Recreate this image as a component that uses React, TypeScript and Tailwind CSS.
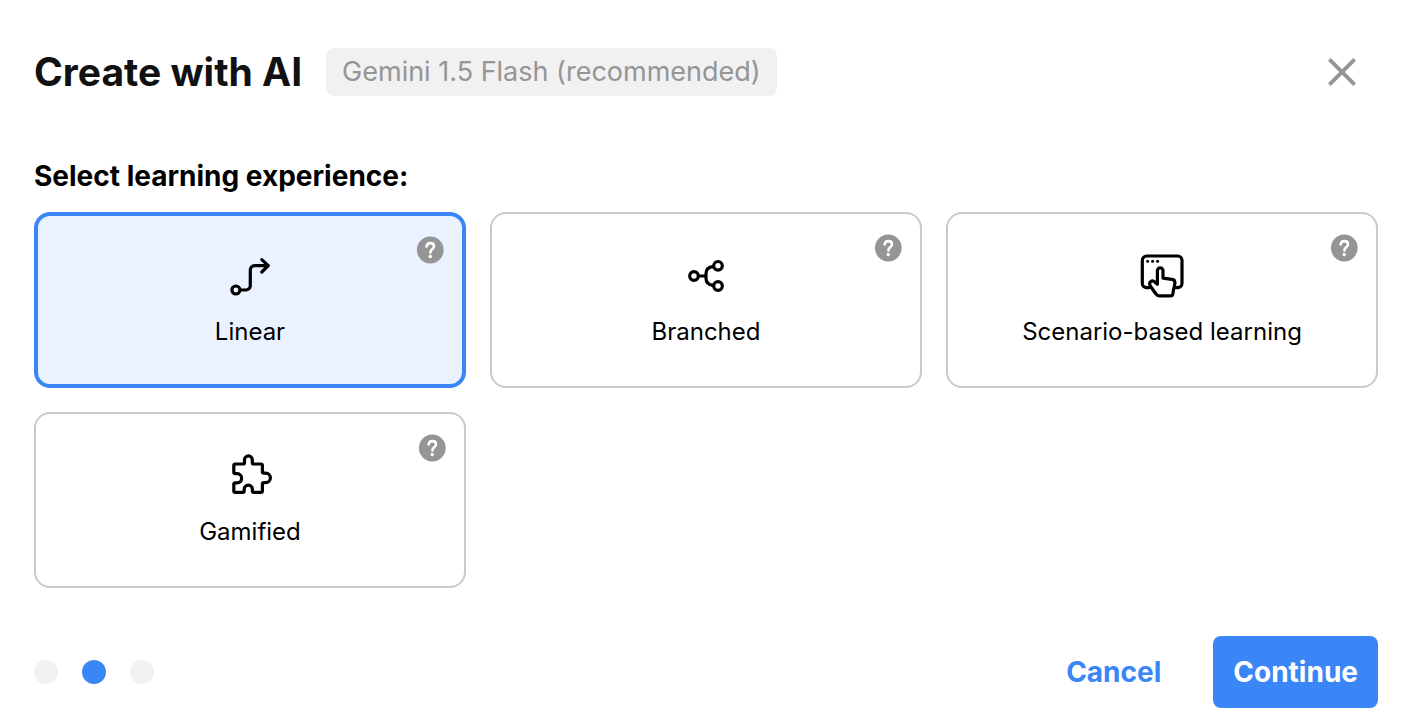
import React, { useState } from 'react';
import { MdClose } from 'react-icons/md';

interface Experience {
  id: string;
  label: string;
  icon: React.ReactNode;
}

const IconFrame: React.FC<{ children: React.ReactNode }> = ({ children }) => (
  <svg
    className="size-12"
    viewBox="0 0 48 48"
    fill="none"
    stroke="currentColor"
    strokeWidth="3.2"
    strokeLinecap="round"
    strokeLinejoin="round"
    aria-hidden="true"
  >
    {children}
  </svg>
);

const HelpIcon: React.FC = () => (
  <svg className="size-8" viewBox="0 0 32 32" fill="none" aria-hidden="true">
    <circle cx="16.3" cy="16" r="13.4" fill="currentColor" />
    <path
      d="M12.6 12.4c.4-2.1 1.8-3.3 3.7-3.3 2.2 0 3.7 1.2 3.7 3.1 0 1.4-.7 2.2-1.8 3.1-1.2 1-1.8 1.6-1.8 3.2"
      stroke="white"
      strokeWidth="2.6"
      strokeLinecap="round"
      strokeLinejoin="round"
    />
    <circle cx="16.3" cy="22.5" r="1.7" fill="white" />
  </svg>
);

const experiences: Experience[] = [
  {
    id: 'linear',
    label: 'Linear',
    icon: (
      <IconFrame>
        <circle cx="9.9" cy="38" r="4" />
        <path d="M14.5 38H20a4.3 4.3 0 0 0 4.3-4.3V17.9a4.3 4.3 0 0 1 4.3-4.3H42" />
        <path d="M35.8 7.6l6.4 6-6.4 6.4" />
      </IconFrame>
    ),
  },
  {
    id: 'branched',
    label: 'Branched',
    icon: (
      <IconFrame>
        <circle cx="12" cy="24" r="4.3" />
        <circle cx="36" cy="13.8" r="4.3" />
        <circle cx="36" cy="34" r="4.3" />
        <path d="M17 24h7M31 14.6c-4.4.4-7 3.2-7 7.2v4.4c0 4 2.6 6.6 7 7.2" />
      </IconFrame>
    ),
  },
  {
    id: 'scenario',
    label: 'Scenario-based learning',
    icon: (
      <IconFrame>
        <path d="M11 35.6H8.6a4.3 4.3 0 0 1-4.3-4.3V8.3A4.3 4.3 0 0 1 8.6 4h31.1a4.3 4.3 0 0 1 4.3 4.3v23a4.3 4.3 0 0 1-4.3 4.3h-2.4" />
        <g fill="currentColor" stroke="none">
          <circle cx="9.6" cy="9.3" r="1.5" />
          <circle cx="14.6" cy="9.3" r="1.5" />
          <circle cx="19.6" cy="9.3" r="1.5" />
        </g>
        <path d="M19.4 32.2V18.6a2.8 2.8 0 0 1 5.6 0v7.6l9 1.1c2.2.3 3 1.5 2.9 3.6-.1 2.600-1 4.200-1.400 6.800l-.6 4c-.2 1.400-.9 2.200-2.200 2.200H21c-1.300 0-2.100-.6-2.800-1.700l-5.400-7.500c-1.200-1.800-1.600-3.400-.6-4.700 1-1.200 2.700-1.300 4.200-.2z" />
      </IconFrame>
    ),
  },
  {
    id: 'gamified',
    label: 'Gamified',
    icon: (
      <IconFrame>
        <path d="M9.4 12H17c1 0 1.5-.6 1.5-1.6V7.8a3.9 3.9 0 0 1 7.8 0v2.6c0 1 .5 1.6 1.5 1.6h7c1 0 1.6.6 1.6 1.6v6c0 1 .6 1.6 1.6 1.6h1.7c2.8 0 4.7 2 4.7 4.6s-1.9 4.8-4.7 4.8H38c-1 0-1.6.6-1.6 1.6v6.600c0 1-.6 1.6-1.6 1.6h-6.8c-1 0-1.6-.6-1.6-1.6v-1.6a4.1 4.1 0 0 0-8.2 0v1.6c0 1-.6 1.6-1.6 1.6H9.4c-1 0-1.6-.6-1.6-1.6V32.4c0-1 .6-1.6 1.6-1.6h1.8c2.6 0 4.4-1.9 4.4-4.5s-1.8-4.6-4.4-4.6H9.4c-1 0-1.6-.6-1.6-1.6v-6.5c0-1 .6-1.6 1.6-1.6z" />
      </IconFrame>
    ),
  },
];

const ExperienceCard: React.FC<{
  item: Experience;
  selected: boolean;
  onSelect: () => void;
}> = ({ item, selected, onSelect }) => (
  <div
    className={`relative h-44 rounded-2xl ${
      selected ? 'border-4 border-[#3b86f7] bg-[#eaf2ff]' : 'border-2 border-[#cacaca] bg-white'
    }`}
  >
    <label className="flex h-full cursor-pointer flex-col items-center justify-center gap-4 text-2xl text-black">
      <input
        type="radio"
        name="experience"
        value={item.id}
        checked={selected}
        onChange={onSelect}
        className="sr-only"
      />
      {item.icon}
      <span>{item.label}</span>
    </label>
    <button type="button" aria-label={`About ${item.label}`} className="absolute top-[18px] right-4 text-[#959595]">
      <HelpIcon />
    </button>
  </div>
);

const steps = [1, 2, 3];
const currentStep = 2;

export default function App() {
  const [selected, setSelected] = useState('linear');

  return (
    <main className="min-h-screen bg-white pt-12 pr-9 pb-5 pl-[34px] font-['Inter',sans-serif]">
      <header className="flex items-center justify-between pr-3">
        <div className="flex items-center gap-6">
          <h1 className="text-[39px] leading-12 font-bold text-[#111111]">Create with AI</h1>
          <span className="rounded-lg bg-[#f1f1f1] px-4 text-[27px] leading-12 text-[#959595]">
            Gemini 1.5 Flash (recommended)
          </span>
        </div>
        <button type="button" aria-label="Close" className="text-[#959595]">
          <MdClose className="size-12" />
        </button>
      </header>

      <fieldset className="mt-15">
        <legend className="text-[28px] leading-10 font-bold text-black">Select learning experience:</legend>
        <div className="mt-4 grid grid-cols-3 gap-6">
          {experiences.map((item) => (
            <ExperienceCard
              key={item.id}
              item={item}
              selected={selected === item.id}
              onSelect={() => setSelected(item.id)}
            />
          ))}
        </div>
      </fieldset>

      <footer className="mt-12 flex items-center justify-between">
        <div className="flex gap-6">
          {steps.map((step) => (
            <span
              key={step}
              className={`size-6 rounded-full ${step === currentStep ? 'bg-[#3b86f7]' : 'bg-[#f1f1f1]'}`}
            />
          ))}
        </div>
        <div className="flex items-center gap-8 text-[28px] font-bold">
          <button type="button" className="h-18 px-5 text-[#3b86f7]">
            Cancel
          </button>
          <button type="button" className="h-18 rounded-lg bg-[#3b86f7] px-5 text-white">
            Continue
          </button>
        </div>
      </footer>
    </main>
  );
}
